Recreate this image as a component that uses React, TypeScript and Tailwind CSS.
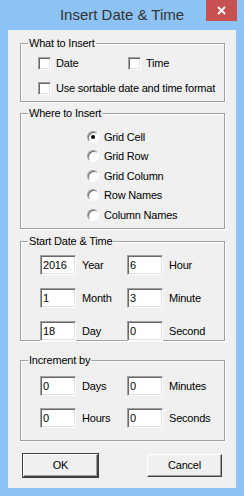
import type { ReactNode } from "react";

const sunken =
  "border border-t-[#a0a0a0] border-l-[#a0a0a0] border-b-white border-r-white shadow-[inset_1px_1px_0_#696969,inset_-1px_-1px_0_#e3e3e3] bg-white";

function Group({ label, className, children }: { label: string; className: string; children: ReactNode }) {
  return (
    <div className={`relative ml-[12px] w-[205px] border border-[#a0a0a0] shadow-[1px_1px_0_#fff,inset_1px_1px_0_#fff] ${className}`}>
      <span className="absolute -top-[8px] left-[7px] bg-[#f0f0f0] px-[1px] leading-[14px]">{label}</span>
      {children}
    </div>
  );
}

function Check({ label, width }: { label: string; width?: string }) {
  return (
    <div className={`flex items-center gap-[5px] ${width ?? ""}`}>
      <span className={`h-[13px] w-[13px] ${sunken}`} />
      <span>{label}</span>
    </div>
  );
}

function Radio({ label, checked }: { label: string; checked?: boolean }) {
  return (
    <div className="flex h-[19.5px] items-center gap-[5px]">
      <span className="flex h-[12px] w-[12px] items-center justify-center rounded-full border border-t-[#a0a0a0] border-l-[#a0a0a0] border-b-white border-r-white bg-white shadow-[inset_1px_1px_0_#696969]">
        {checked && <span className="h-[4px] w-[4px] rounded-full bg-black" />}
      </span>
      <span>{label}</span>
    </div>
  );
}

function Field({ value, label, width }: { value: string; label: string; width?: string }) {
  return (
    <div className={`flex items-center gap-[6px] ${width ?? ""}`}>
      <span className={`flex h-[20px] w-[36px] items-center pl-[2px] ${sunken}`}>{value}</span>
      <span>{label}</span>
    </div>
  );
}

function Button({ label, isDefault }: { label: string; isDefault?: boolean }) {
  return (
    <button
      className={`flex h-[23px] w-[75px] items-center justify-center border border-t-white border-l-white border-b-[#404040] border-r-[#404040] bg-[#f0f0f0] shadow-[inset_-1px_-1px_0_#a0a0a0] ${
        isDefault ? "outline outline-1 outline-[#404040]" : ""
      }`}
    >
      {label}
    </button>
  );
}

export default function App() {
  return (
    <div className="flex h-[496px] w-[244px] flex-col bg-[#8cc3f4] font-['Liberation_Sans',Arial,sans-serif] text-[11px] tracking-[-0.2px] text-black">
      <div className="relative flex h-[30px] items-center justify-center tracking-normal">
        <span className="text-[15px] text-[#333333]">Insert Date &amp; Time</span>
        <div className="absolute right-[7px] top-0 flex h-[21px] w-[31px] items-center justify-center bg-[#c75050]">
          <svg width="9" height="9" viewBox="0 0 9 9">
            <path d="M1 1L8 8M8 1L1 8" stroke="#fff" strokeWidth="1.8" />
          </svg>
        </div>
      </div>

      <div className="ml-[8px] flex h-[458px] w-[228px] flex-col bg-[#f0f0f0] pt-[13px]">
        <Group label="What to Insert" className="h-[59px] pl-[17px] pt-[13px]">
          <div className="flex h-[13px]">
            <Check label="Date" width="w-[90px]" />
            <Check label="Time" />
          </div>
          <div className="mt-[12px] flex h-[13px]">
            <Check label=" Use sortable date and time format" />
          </div>
        </Group>

        <Group label="Where to Insert" className="mt-[11px] h-[116px] pl-[66px] pt-[13px]">
          <Radio label="Grid Cell" checked />
          <Radio label="Grid Row" />
          <Radio label="Grid Column" />
          <Radio label="Row Names" />
          <Radio label="Column Names" />
        </Group>

        <Group label="Start Date & Time" className="mt-[12px] h-[100px] pl-[19px] pt-[13px]">
          <div className="flex flex-col gap-[13px]">
            <div className="flex">
              <Field value="2016" label="Year" width="w-[87px]" />
              <Field value="6" label="Hour" />
            </div>
            <div className="flex">
              <Field value="1" label="Month" width="w-[87px]" />
              <Field value="3" label="Minute" />
            </div>
            <div className="flex">
              <Field value="18" label="Day" width="w-[87px]" />
              <Field value="0" label="Second" />
            </div>
          </div>
        </Group>

        <Group label="Increment by" className="mt-[19px] h-[81px] pl-[19px] pt-[15px]">
          <div className="flex flex-col gap-[12px]">
            <div className="flex">
              <Field value="0" label="Days" width="w-[87px]" />
              <Field value="0" label="Minutes" />
            </div>
            <div className="flex">
              <Field value="0" label="Hours" width="w-[87px]" />
              <Field value="0" label="Seconds" />
            </div>
          </div>
        </Group>

        <div className="mt-[13px] flex gap-[49px] pl-[15px]">
          <Button label="OK" isDefault />
          <Button label="Cancel" />
        </div>
      </div>
    </div>
  );
}
